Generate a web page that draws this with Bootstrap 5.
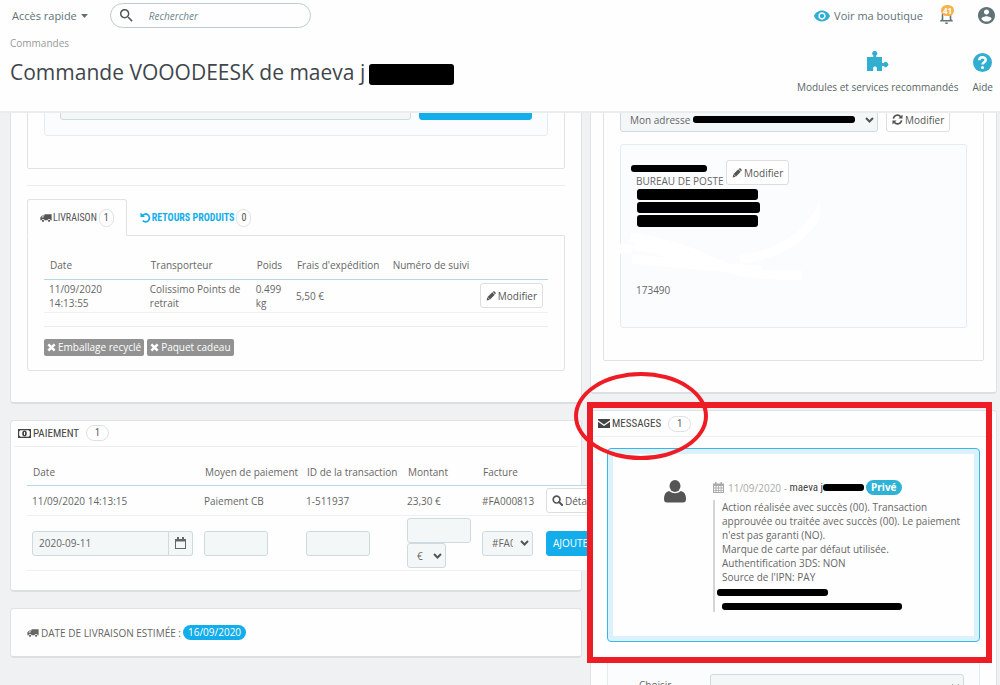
<!DOCTYPE html>
<html lang="fr">
<head>
<meta charset="utf-8">
<meta name="viewport" content="width=device-width, initial-scale=1">
<title>Commande VOOODEESK</title>
<link href="https://cdn.jsdelivr.net/npm/bootstrap@5.3.0/dist/css/bootstrap.min.css" rel="stylesheet">
<style>
  :root { --line:#e0e2e4; --ctl:#cfdade; --blue:#14adeb; --teal:#31aed0; --txt:#666; --narrow:"Roboto Condensed","Liberation Sans Narrow","Open Sans",sans-serif; }
  body { font-family:"Open Sans",sans-serif; font-size:10px; line-height:14px; color:var(--txt); background:#eff1f2; }
  svg { fill:currentColor; flex:none; }
  .top-bar { background:#fefefe; border-bottom:2px solid #ececee; height:113px; padding:3px 5px 0 10px; z-index:5; }
  .quick, .shop-link { font-size:11px; color:#5f7379; }
  .quick { padding-left:2px; }
  .search-pill { width:201px; height:25px; border:1px solid #bbcdd2; border-radius:13px; padding:0 9px; color:#555; margin-left:22px; }
  .search-pill input { border:0; outline:0; background:none; font-size:10px; min-width:0; padding:0; }
  .search-pill input::placeholder { font-style:italic; color:#6c868e; opacity:1; }
  .crumb { color:#999; margin-top:8px; }
  h1 { font-size:21px; line-height:28px; color:#3f464b; margin:8px 0 0; }
  .tool-link { color:#5b6468; text-align:center; }
  .tool-link svg { color:var(--teal); display:block; margin:0 auto 8px; }
  .tool-row { gap:14px; margin-top:23px; padding-right:2px; }
  .count-dot { position:absolute; top:-2px; left:2px; background:#f6b24e; color:#fff; border-radius:6px; font-size:8px; line-height:11px; padding:0 2px; font-weight:700; }
  .viewport { overflow:hidden; flex:1 1 0; min-height:0; }
  .board { display:grid; grid-template-columns:minmax(0,572fr) minmax(0,407fr); gap:8px; padding:0 3px 0 10px; margin-top:-52px; }
  .side { z-index:1; }
  .sheet { background:#fefefe; border:1px solid var(--line); border-bottom:2px solid #dcdfe1; border-radius:4px; position:relative; }
  .sheet + .sheet { margin-top:16px; }
  .order-sheet { padding:0 16px 31px; }
  .frame { border:1px solid var(--line); border-radius:2px; padding:16px 16px 32px; }
  .well-box { background:#fbfcfe; border:1px solid #e4ecf2; border-radius:3px; padding:15px; }
  .ctl { height:25px; background-color:#f4f7f8; border:1px solid var(--ctl); border-radius:3px; font-size:10px; line-height:14px; color:#666; padding:4px 6px; }
  select.ctl { padding:4px 19px 4px 9px; background-image:url("data:image/svg+xml,%3csvg xmlns='http://www.w3.org/2000/svg' viewBox='0 0 9 8'%3e%3cpath fill='none' stroke='%23555' stroke-width='2' d='M1 2l3.500 3.500L8 2'/%3e%3c/svg%3e"); background-size:9px 8px; background-position:right 3px center; background-repeat:no-repeat; text-overflow:clip; }
  .btn-ctl { height:25px; font-size:10px; line-height:14px; padding:4px 5px; border:1px solid #dcdee0; border-radius:3px; background:#fff; color:#555; display:inline-flex; align-items:center; gap:2px; white-space:nowrap; }
  .btn-add { background:var(--blue); border-color:var(--blue); color:#fff; padding:4px 6px; }
  .rule { height:1px; background:#ececee; }
  .tab-strip { margin-top:13px; font-family:var(--narrow); font-size:10px; }
  .tab-strip .nav-link { height:37px; padding:0 12px; border-radius:3px 3px 0 0; color:var(--blue); display:flex; align-items:center; gap:1px; border:1px solid transparent; margin-bottom:-1px; }
  .tab-strip .nav-link.active { color:#555; background:#fefefe; border-color:var(--line); border-bottom-color:#fefefe; position:relative; }
  .ring { border:1px solid #dfe1e3; border-radius:10px; color:#555; font-size:10px; line-height:16px; padding:0 4px; margin-left:1px; }
  .pane { border:1px solid var(--line); border-radius:0 0 3px 3px; padding:16px 16px 14px; }
  .grid-table { width:100%; table-layout:fixed; margin:0; }
  .grid-table th { font-weight:400; height:27px; padding:0 6px; vertical-align:middle; border-bottom:1px solid #b5d8e8; white-space:nowrap; }
  .grid-table td { padding:2px 5px; vertical-align:middle; border-bottom:1px solid #f0f0f2; background:#fefefe; white-space:nowrap; }
  .grid-table td.wrap-cell { white-space:normal; }
  .tag-off { background:#929292; color:#fff; border-radius:2px; line-height:17px; padding:0 3px; display:flex; align-items:center; gap:2px; }
  .sheet-title { font-family:var(--narrow); font-weight:400; font-size:11px; line-height:25px; height:26px; color:#444; margin:0 3px; padding:0 4px; border-bottom:1px solid #eee; display:flex; align-items:center; gap:2px; }
  .sheet-title .ring { padding:0 8px; line-height:14px; margin-left:5px; }
  .pill-date { background:var(--blue); color:#fff; border-radius:8px; padding:0 5px; line-height:15px; }
  .wide-table { width:620px; }
  .pay-area { padding:12px 0 19px 16px; }
  .redact { display:inline-block; background:#000; border-radius:3px; vertical-align:middle; }
  .address { min-height:184px; position:relative; }
  .smudge { position:absolute; left:-1px; top:50px; color:#fff; fill:none; }
  .address-text > * { position:relative; }
  .message { margin:11px 16px 0; border:1px solid #3db4e8; border-radius:4px; box-shadow:inset 0 0 0 5px #daf2fc; min-height:194px; padding:31px 14px 29px 56px; gap:27px; }
  .quote { border-left:2px solid #d5d5d5; padding-left:7px; margin-top:5px; }
  .who { color:#444; font-family:var(--narrow); font-size:11px; }
  .mark-box { position:absolute; left:-4px; right:4px; top:-9px; height:261px; border:6px solid #ee1c25; pointer-events:none; }
  .mark-ring { position:absolute; left:-17px; top:-39px; width:134px; height:88px; border:4px solid #ee1c25; border-radius:50%; pointer-events:none; }
</style>
</head>
<body class="vh-100 d-flex flex-column overflow-hidden">
<svg class="d-none">
  <symbol id="truck" viewBox="0 0 16 12"><path d="M6 1h9.500v8h-1.300a2.200 2.200 0 0 0-4.200 0H6.200a2.200 2.200 0 0 0-4.200 0H.5V5L3 2.500h3zM4.800 3.700H3.500L1.900 5.400h2.900z"/><circle cx="4" cy="9.800" r="1.500"/><circle cx="12.100" cy="9.800" r="1.500"/></symbol>
  <symbol id="pencil" viewBox="0 0 16 16"><path d="M1 15l1-5 4 4zM2.500 9.500l7.500-7.500 4 4-7.500 7.500zM11 1.500l1-1q.7-.5 1.400 0l2.100 2.100q.5.700 0 1.400l-1 1z"/></symbol>
  <symbol id="cross" viewBox="0 0 10 10"><path d="M2.500.5L5 3 7.500.5l2 2L7 5l2.500 2.500-2 2L5 7 2.500 9.500l-2-2L3 5 .5 2.500z"/></symbol>
  <symbol id="search" viewBox="3 3 18 18"><path d="M15.500 14h-.79l-.28-.27C15.410 12.590 16 11.110 16 9.500 16 5.910 13.090 3 9.500 3S3 5.910 3 9.500 5.910 16 9.500 16c1.610 0 3.090-.59 4.230-1.570l.27.28v.79l5 4.990L20.490 19l-4.990-5zm-6 0C7.010 14 5 11.990 5 9.500S7.010 5 9.500 5 14 7.010 14 9.500 11.990 14 9.500 14z"/></symbol>
  <symbol id="lens" viewBox="0 0 12 12"><circle cx="5" cy="5" r="3.700" fill="none" stroke="currentColor" stroke-width="1.800"/><path d="M7.700 7.700l3.300 3.300" stroke="currentColor" stroke-width="2.200" stroke-linecap="round"/></symbol>
</svg>

<header class="top-bar d-flex flex-column position-relative">
  <div class="d-flex align-items-center">
    <a href="#" class="quick text-decoration-none d-flex align-items-center gap-1">Accès rapide <svg width="7" height="4" viewBox="0 0 7 4"><path d="M0 0h7L3.500 4z"/></svg></a>
    <div class="search-pill d-flex align-items-center gap-3">
      <svg width="13" height="13"><use href="#search"/></svg>
      <input type="text" placeholder="Rechercher" aria-label="Rechercher">
    </div>
    <a href="#" class="shop-link text-decoration-none ms-auto d-flex align-items-center gap-1">
      <svg width="16" height="16" viewBox="1 1 22 22" style="color:var(--teal)"><path d="M12 4.500C7 4.500 2.730 7.610 1 12c1.730 4.390 6 7.500 11 7.500s9.270-3.110 11-7.500c-1.730-4.390-6-7.500-11-7.500zM12 17c-2.760 0-5-2.240-5-5s2.240-5 5-5 5 2.240 5 5-2.240 5-5 5zm0-8c-1.660 0-3 1.340-3 3s1.340 3 3 3 3-1.340 3-3-1.340-3-3-3z"/></svg>
      Voir ma boutique</a>
    <a href="#" class="shop-link position-relative ms-3" aria-label="Notifications"><svg width="15" height="16" viewBox="3 2 18 20"><path d="M12 22c1.100 0 2-.9 2-2h-4c0 1.100.89 2 2 2zm6-6v-5c0-3.070-1.640-5.640-4.500-6.320V4c0-.83-.67-1.500-1.500-1.500s-1.500.67-1.500 1.500v.68C7.630 5.360 6 7.920 6 11v5l-2 2v1h16v-1l-2-2zm-2 1H8v-6c0-2.480 1.510-4.500 4-4.500s4 2.020 4 4.500v6z"/></svg><span class="count-dot">41</span></a>
    <a href="#" class="shop-link ms-4" aria-label="Profil"><svg width="17" height="17" viewBox="2 2 20 20"><path d="M12 2C6.480 2 2 6.480 2 12s4.480 10 10 10 10-4.480 10-10S17.520 2 12 2zm0 3c1.660 0 3 1.340 3 3s-1.340 3-3 3-3-1.340-3-3 1.340-3 3-3zm0 14.200c-2.500 0-4.710-1.280-6-3.220.03-1.990 4-3.080 6-3.080 1.990 0 5.970 1.090 6 3.080-1.290 1.940-3.500 3.220-6 3.220z"/></svg></a>
  </div>
  <div class="d-flex justify-content-between align-items-start">
    <div>
      <div class="crumb">Commandes</div>
      <h1 class="fw-normal text-nowrap">Commande VOOODEESK de maeva j<span class="redact ms-1" style="width:85px;height:21px"></span></h1>
    </div>
    <div class="tool-row d-flex align-items-end text-nowrap">
      <a href="#" class="tool-link text-decoration-none"><svg width="22" height="21" viewBox="0 0 22 21"><path d="M0 6h6.300V4.400a2.500 2.500 0 1 1 2.900 0V6H15v6h1.700a2.500 2.500 0 1 1 0 3H15v5H9.800v-2.300c1-3-4.600-3-3.600 0V20H0z"/></svg>Modules et services recommandés</a>
      <a href="#" class="tool-link text-decoration-none"><svg width="19" height="19" viewBox="0 0 20 20"><circle cx="10" cy="10" r="10"/><path d="M6.600 7.700c0-4.400 6.800-4.100 6.800-.4 0 2.300-3.400 2.400-3.400 4.900" fill="none" stroke="#fff" stroke-width="2.600"/><circle cx="10" cy="15.300" r="1.600" fill="#fff"/></svg>Aide</a>
    </div>
  </div>
</header>

<main class="viewport">
<div class="board">
  <div>
    <section class="sheet order-sheet">
      <div class="frame">
        <div class="well-box d-flex gap-2">
          <input type="text" class="ctl flex-grow-1" aria-label="Note">
          <button type="button" class="btn-ctl btn-add" style="width:24%" aria-label="Valider"></button>
        </div>
      </div>
      <div class="rule mt-3"></div>
      <nav class="nav tab-strip">
        <a href="#" class="nav-link active"><svg width="12" height="10"><use href="#truck"/></svg> LIVRAISON <span class="ring">1</span></a>
        <a href="#" class="nav-link"><svg width="11" height="11" viewBox="0 0 12 12"><path d="M2.500 4A4.300 4.300 0 1 1 3 9.500" fill="none" stroke="currentColor" stroke-width="1.900"/><path d="M.5.5v5h5z"/></svg> <b>RETOURS PRODUITS</b> <span class="ring">0</span></a>
      </nav>
      <div class="pane">
        <table class="grid-table">
          <colgroup><col style="width:20%"><col style="width:21%"><col style="width:8%"><col style="width:19%"><col style="width:17%"><col></colgroup>
          <thead><tr><th>Date</th><th>Transporteur</th><th>Poids</th><th>Frais d'expédition</th><th>Numéro de suivi</th><th></th></tr></thead>
          <tbody><tr><td class="wrap-cell">11/09/2020<br>14:13:55</td><td class="wrap-cell">Colissimo Points de retrait</td><td class="wrap-cell">0.499 kg</td><td>5,50 €</td><td></td><td class="text-end"><button type="button" class="btn-ctl"><svg width="10" height="10"><use href="#pencil"/></svg> Modifier</button></td></tr></tbody>
        </table>
        <div class="rule" style="margin:13px 0 12px"></div>
        <div class="d-flex" style="gap:3px">
          <span class="tag-off"><svg width="9" height="9"><use href="#cross"/></svg> Emballage recyclé</span>
          <span class="tag-off"><svg width="9" height="9"><use href="#cross"/></svg> Paquet cadeau</span>
        </div>
      </div>
    </section>

    <section class="sheet">
      <h2 class="sheet-title"><svg width="13" height="9" viewBox="0 0 13 9"><path fill-rule="evenodd" d="M0 0h13v9H0zM2.500 1.200L1.200 2.500v4l1.300 1.300h8l1.300-1.300v-4l-1.300-1.300z"/><path fill-rule="evenodd" d="M6.500 1.500a2.300 3 0 0 1 0 6 2.300 3 0 0 1 0-6zM6 3v3h1V3z"/></svg> PAIEMENT <span class="ring">1</span></h2>
      <div class="pay-area">
        <table class="grid-table wide-table">
          <colgroup><col style="width:172px"><col style="width:102px"><col style="width:101px"><col style="width:75px"><col style="width:64px"><col></colgroup>
          <thead><tr><th>Date</th><th>Moyen de paiement</th><th>ID de la transaction</th><th>Montant</th><th>Facture</th><th></th></tr></thead>
          <tbody>
            <tr><td>11/09/2020 14:13:15</td><td>Paiement CB</td><td>1-511937</td><td>23,30 €</td><td>#FA000813</td><td><button type="button" class="btn-ctl"><svg width="11" height="11"><use href="#lens"/></svg> Détails</button></td></tr>
            <tr>
              <td><div class="d-flex"><input type="text" class="ctl rounded-end-0" value="2020-09-11" aria-label="Date" style="width:137px"><button type="button" class="ctl rounded-start-0 border-start-0" aria-label="Calendrier"><svg width="11" height="12" viewBox="0 0 11 12" class="d-block"><path fill-rule="evenodd" d="M0 2h2V0h2v2h3V0h2v2h2v10H0zM1 4.500V11h9V4.500z"/></svg></button></div></td>
              <td><input type="text" class="ctl" aria-label="Moyen de paiement" style="width:64px"></td>
              <td><input type="text" class="ctl" aria-label="ID de la transaction" style="width:64px"></td>
              <td><input type="text" class="ctl d-block" aria-label="Montant" style="width:64px"><select class="form-select ctl" aria-label="Devise" style="width:39px"><option>€</option></select></td>
              <td><select class="form-select ctl" aria-label="Facture" style="width:51px"><option>#FA000813</option></select></td>
              <td><button type="button" class="btn-ctl btn-add">AJOUTER</button></td>
            </tr>
          </tbody>
        </table>
      </div>
    </section>

    <section class="sheet p-3">
      <div class="d-flex align-items-center" style="gap:2px"><svg width="12" height="10"><use href="#truck"/></svg> DATE DE LIVRAISON ESTIMÉE : <span class="pill-date">16/09/2020</span></div>
    </section>
  </div>

  <div class="side">
    <section class="sheet" style="padding:0 12px 31px">
      <div class="frame" style="padding-top:44px">
        <div class="d-flex gap-2">
          <div class="position-relative">
            <select class="form-select ctl" aria-label="Adresse" style="width:258px"><option>Mon adresse -</option></select>
            <span class="redact position-absolute" style="left:73px;top:9px;width:162px;height:7px"></span>
          </div>
          <button type="button" class="btn-ctl"><svg width="11" height="11" viewBox="0 0 12 12"><path d="M1.500 5A4.500 4.500 0 0 1 9.500 3M10.500 7A4.500 4.500 0 0 1 2.500 9" fill="none" stroke="currentColor" stroke-width="1.800"/><path d="M11.500.5v4.500H7zM.5 11.500V7H5z"/></svg> Modifier</button>
        </div>
        <div class="well-box address d-flex align-items-start" style="margin-top:12px">
          <svg class="smudge" width="200" height="90" viewBox="0 0 200 90"><path d="M0 54h12M10 42q50 8 80 24t92 14M14 50l90 20M12 64l130 12M120 64q60-6 85-58" stroke="#fff" stroke-width="9"/></svg>
          <div class="address-text text-nowrap">
            <div><span class="redact" style="width:76px;height:7px;margin-left:-5px"></span></div>
            <div>BUREAU DE POSTE</div>
            <div class="d-flex flex-column" style="gap:2px;padding:1px"><span class="redact" style="width:121px;height:11px"></span><span class="redact" style="width:123px;height:11px"></span><span class="redact" style="width:121px;height:12px"></span></div>
            <div style="margin-top:55px">173490</div>
          </div>
          <button type="button" class="btn-ctl position-absolute" style="left:105px;top:15px"><svg width="10" height="10"><use href="#pencil"/></svg> Modifier</button>
        </div>
      </div>
    </section>

    <section class="sheet">
      <h2 class="sheet-title"><svg width="12" height="9" viewBox="0 0 12 9"><path d="M0 0h12v1.300L6 5.500 0 1.300zM0 2.800L6 7l6-4.200V9H0z"/></svg> MESSAGES <span class="ring">1</span></h2>
      <div class="message d-flex align-items-start">
        <svg width="22" height="23" viewBox="0 0 22 23"><ellipse cx="11" cy="6" rx="5.500" ry="6" fill="#555"/><path fill="#555" d="M5 11q6 4.500 12 0 5 1 5 8 0 3.500-3 3.500H3q-3 0-3-3.500 0-7 5-8z"/></svg>
        <div>
          <div class="d-flex align-items-center text-nowrap" style="color:#aaa">
            <svg width="11" height="11" viewBox="0 0 11 11" class="me-1"><path fill-rule="evenodd" d="M0 1.500h2V0h1.500v1.500h4V0H9v1.500h2V11H0zM1 4v1.500h1.500V4zm2.500 0v1.500h1.700V4zm2.500 0v1.500h1.700V4zm2.500 0v1.500H10V4zM1 6.500V8h1.500V6.500zm2.500 0V8h1.700V6.500zm2.500 0V8h1.700V6.500zm2.500 0V8H10V6.500zM1 8.800V10h1.500V8.800zm2.500 0V10h1.700V8.800zm2.500 0V10h1.700V8.800zm2.500 0V10H10V8.800z"/></svg>
            11/09/2020 -&nbsp;<span class="who">maeva j</span><span class="redact" style="width:41px;height:7px"></span>
            <span class="pill-date fw-bold" style="background:#2eb3d6;margin-left:2px">Privé</span>
          </div>
          <div class="quote">Action réalisée avec succès (00). Transaction approuvée ou traitée avec succès (00). Le paiement n'est pas garanti (NO).<br>Marque de carte par défaut utilisée.<br>Authentification 3DS: NON<br>Source de l'IPN: PAY<br><span class="redact" style="width:111px;height:7px;margin-left:-5px"></span><br><span class="redact" style="width:180px;height:7px"></span></div>
        </div>
      </div>
      <div class="well-box d-flex mx-3" style="margin-top:16px">
        <label for="std" class="flex-grow-1 ps-3 pt-1">Choisir</label>
        <select id="std" class="form-select ctl" style="width:254px"><option></option></select>
      </div>
      <div class="mark-box"></div>
      <div class="mark-ring"></div>
    </section>
  </div>
</div>
</main>
<script src="https://cdn.jsdelivr.net/npm/bootstrap@5.3.0/dist/js/bootstrap.bundle.min.js"></script>
</body>
</html>
